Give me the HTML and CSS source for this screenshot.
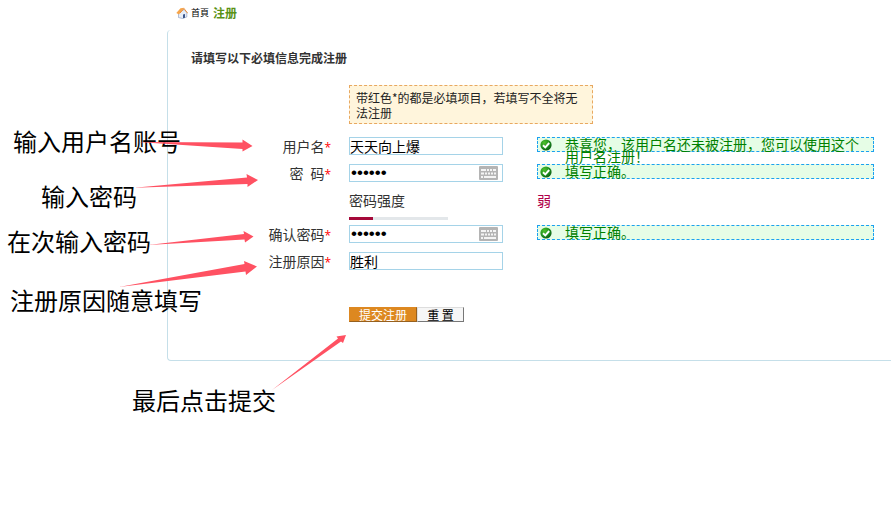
FILE: index.html
```html
<!DOCTYPE html>
<html lang="zh-CN">
<head>
<meta charset="utf-8">
<title>注册</title>
<link rel="stylesheet" href="styles.css">
</head>
<body>
<svg class="defs" aria-hidden="true">
  <defs>
    <radialGradient id="ball" cx="35%" cy="30%" r="75%">
      <stop offset="0" stop-color="#4fc02c"/>
      <stop offset="0.6" stop-color="#1e8f1e"/>
      <stop offset="1" stop-color="#0a5a14"/>
    </radialGradient>
    <symbol id="ok" viewBox="0 0 12 12">
      <circle cx="6" cy="6" r="5.6" fill="url(#ball)"/>
      <path d="M3 6.2 5.3 8.4 9.2 4" fill="none" stroke="#fff" stroke-width="1.9"/>
    </symbol>
    <symbol id="keyboard" viewBox="0 0 19 14">
      <rect width="19" height="14" rx="1" fill="#b4b4b4"/>
      <path d="M2 4h5M8 4h2M11 4h2M14 4h3M2 7.500h3M6 7.500h2M9 7.500h2M12 7.500h2M15 7.500h2" stroke="#f4f4f4" stroke-width="2"/>
      <path d="M2 11h2M5 11h12" stroke="#f4f4f4" stroke-width="1.8"/>
    </symbol>
  </defs>
</svg>

<main class="page">
  <nav class="crumbs">
    <svg class="home-icon" viewBox="0 0 12 12" aria-hidden="true">
      <path d="M2.5 6v4.5l4 1 4.300-1.500V5.500L8 2.500z" fill="#e6edf8" stroke="#8497bd" stroke-width=".6"/>
      <path d="M.3 6 4.500 1.200 8.300.8 6 3.500 3 7.600z" fill="#f7a54a"/>
      <path d="M4 6 8 1.500 11.700 6.300" fill="none" stroke="#e98b36" stroke-width="1"/>
      <path d="M7 11.300V7.500l2-.5v3.700z" fill="#3c5689"/>
    </svg>
    <a class="crumb-home" href="#">首頁</a>
    <span class="crumb-current">注册</span>
  </nav>

  <form class="panel">
    <h1 class="title">请填写以下必填信息完成注册</h1>
    <p class="notice">带红色*的都是必填项目，若填写不全将无法注册</p>

    <div class="row">
      <label class="label" for="user">用户名<span class="req">*</span></label>
      <input class="field" id="user" type="text" value="天天向上爆">
      <div class="hint"><svg class="ok" aria-hidden="true"><use href="#ok"/></svg>恭喜您，该用户名还未被注册，您可以使用这个用户名注册！</div>
    </div>
    <div class="row">
      <label class="label" for="pwd">密&ensp;码<span class="req">*</span></label>
      <div class="secret">
        <input class="field" id="pwd" type="password" value="123456">
        <svg class="keyboard" aria-hidden="true"><use href="#keyboard"/></svg>
      </div>
      <div class="hint"><svg class="ok" aria-hidden="true"><use href="#ok"/></svg>填写正确。</div>
    </div>
    <div class="row strength">
      <div class="meter">
        <span class="meter-label">密码强度</span>
        <div class="bar"><div class="bar-fill" style="width:24%"></div></div>
      </div>
      <span class="level">弱</span>
    </div>
    <div class="row">
      <label class="label" for="pwd2">确认密码<span class="req">*</span></label>
      <div class="secret">
        <input class="field" id="pwd2" type="password" value="123456">
        <svg class="keyboard" aria-hidden="true"><use href="#keyboard"/></svg>
      </div>
      <div class="hint"><svg class="ok" aria-hidden="true"><use href="#ok"/></svg>填写正确。</div>
    </div>
    <div class="row">
      <label class="label" for="reason">注册原因<span class="req">*</span></label>
      <input class="field" id="reason" type="text" value="胜利">
    </div>
    <div class="actions">
      <button class="btn submit" type="submit">提交注册</button>
      <button class="btn reset" type="reset">重 置</button>
    </div>
  </form>

  <div class="notes">
    <span class="note note-user">输入用户名账号</span>
    <span class="note note-pwd">输入密码</span>
    <span class="note note-again">在次输入密码</span>
    <span class="note note-reason">注册原因随意填写</span>
    <span class="note note-submit">最后点击提交</span>
    <svg class="arrows" viewBox="0 0 400 420" aria-hidden="true">
      <path d="M138 142 242.500 142.500V139.500L252.500 146 242.500 151.500V149z"/>
      <path d="M134 187.700 247 177.500 246.500 174 258 180 247.500 187V184z"/>
      <path d="M148 245 244 234 243.500 231 253.500 236.500 245 242.500 244.500 239.500z"/>
      <path d="M119 287 244.500 264 244 261 257 266.500 246 275 245.500 271.500z"/>
      <path d="M272 390 338 338.500 336.500 336.500 346 335 343 343 341 341.500z"/>
    </svg>
  </div>
</main>
</body>
</html>
```

FILE: styles.css
```css
* { box-sizing: border-box; }

body {
  margin: 0;
  background: #fff;
  color: #333;
  font: 14px/18px "Noto Sans CJK SC", sans-serif;
}

.defs { position: absolute; width: 0; height: 0; }

.page { position: relative; min-height: 100vh; padding: 4px 0 0 167px; }

.crumbs {
  display: flex;
  align-items: center;
  height: 26px;
  padding: 0 0 8px 9px;
}
.home-icon { width: 12px; height: 12px; margin-right: 3px; }
.crumb-home { margin-right: 4px; color: #000; font-size: 9px; text-decoration: none; }
.crumb-current { color: #5a9216; font-size: 12px; font-weight: 700; }

.panel {
  padding: 19px 17px 38px 0;
  border: solid #c5dfe9;
  border-width: 0 0 1px 1px;
  border-radius: 4px 0 0 4px;
}

.title {
  margin: 0 0 18px 23px;
  font-size: 12px;
  line-height: 18px;
  font-weight: 700;
}

.notice {
  width: 244px;
  margin: 0 0 13px 181px;
  padding: 4px 6px 3px;
  border: 1px dashed #e8a860;
  background: #fff5dc;
  color: #222;
  font-size: 12px;
  line-height: 15px;
}

.row {
  display: grid;
  grid-template-columns: 163px 154px minmax(0, 1fr);
  column-gap: 18px;
  align-items: start;
  margin-bottom: 9px;
}
.hint, .level { margin-left: 16px; }

.label { text-align: right; }
.req { color: #f00; font-family: "Open Sans", sans-serif; font-size: 12px; line-height: 12px; }

.field {
  display: block;
  width: 100%;
  height: 18px;
  margin: 0;
  padding: 0;
  border: 1px solid #a5d3e8;
  background: #fff;
  color: #000;
  font: 14px/16px "Noto Sans CJK SC", sans-serif;
}
.field[type="password"] { padding-left: 1px; font-family: "Liberation Sans", sans-serif; font-size: 17px; }

.secret { position: relative; }
.keyboard { position: absolute; top: 2px; right: 5px; width: 19px; height: 14px; }

.hint {
  position: relative;
  height: 15px;
  padding: 0 10px 0 27px;
  border: 1px dashed #1ba1f0;
  background: #e6fde6;
  color: #008000;
  line-height: 12px;
}
.ok { position: absolute; top: 1px; left: 2px; width: 12px; height: 12px; }

.strength { margin-bottom: 5px; }
.meter { grid-column: 2; }
.meter-label { display: block; margin-bottom: 8px; }
.bar { width: 99px; height: 3px; background: #e3e7ea; }
.bar-fill { height: 3px; background: #a5093a; }
.level { color: #b0004a; }

.actions { display: flex; margin: 37px 0 0 181px; }
.btn {
  height: 15px;
  padding: 0 8px;
  border: 1px solid;
  font: 12px/12px "Noto Sans CJK SC", sans-serif;
}
.submit { width: 68px; border-color: #dd8822 #96601f #96601f #dd8822; background: #dd8820; color: #fff; }
.reset { width: 47px; border-color: #ddd #777 #777 #ddd; background: #f6f6f6; color: #000; }

.notes { position: absolute; inset: 0; pointer-events: none; }
.note { position: absolute; color: #000; font-size: 24px; line-height: 30px; white-space: nowrap; }
.note-user { left: 13px; top: 126px; }
.note-pwd { left: 41px; top: 181px; }
.note-again { left: 7px; top: 226px; }
.note-reason { left: 10px; top: 285px; }
.note-submit { left: 132px; top: 385px; }
.arrows { position: absolute; top: 0; left: 0; width: 400px; height: 420px; fill: #ff5162; }
```
